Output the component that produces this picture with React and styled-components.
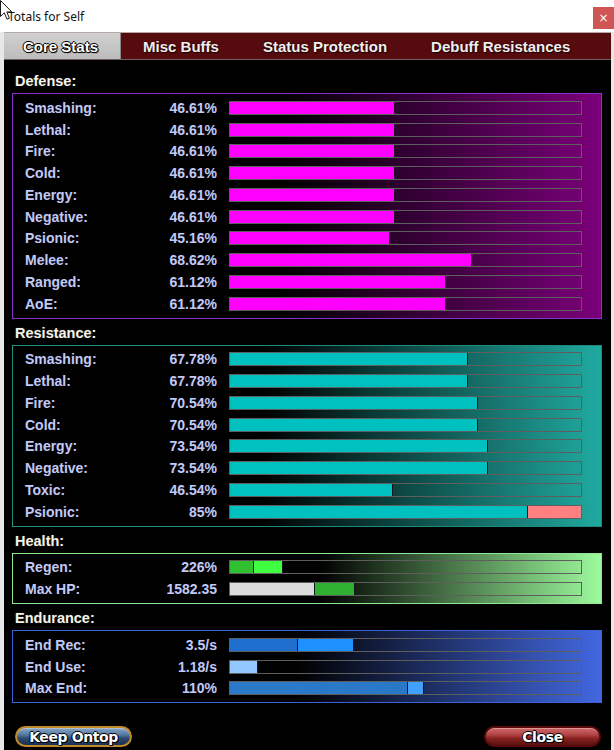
import React from "react";
import styled, { createGlobalStyle } from "styled-components";

const GlobalStyle = createGlobalStyle`
  html, body {
    margin: 0;
    padding: 0;
    background: #e8e8e8;
    overflow: hidden;
  }
  body {
    font-family: "Liberation Sans", Arial, sans-serif;
    height: 750px;
  }
`;

const sections = [
    {
        title: "Defense:",
        border: "#8c2fd0",
        tint: "#7a007a",
        start: 45,
        rows: [
            ["Smashing:", "46.61%", [[46.61, "#ff00ff"]]],
            ["Lethal:", "46.61%", [[46.61, "#ff00ff"]]],
            ["Fire:", "46.61%", [[46.61, "#ff00ff"]]],
            ["Cold:", "46.61%", [[46.61, "#ff00ff"]]],
            ["Energy:", "46.61%", [[46.61, "#ff00ff"]]],
            ["Negative:", "46.61%", [[46.61, "#ff00ff"]]],
            ["Psionic:", "45.16%", [[45.16, "#ff00ff"]]],
            ["Melee:", "68.62%", [[68.62, "#ff00ff"]]],
            ["Ranged:", "61.12%", [[61.12, "#ff00ff"]]],
            ["AoE:", "61.12%", [[61.12, "#ff00ff"]]],
        ],
    },
    {
        title: "Resistance:",
        border: "#1f8a80",
        tint: "#20aaa0",
        start: 42,
        edge: true,
        rows: [
            ["Smashing:", "67.78%", [[67.78, "#00c0c0"]]],
            ["Lethal:", "67.78%", [[67.78, "#00c0c0"]]],
            ["Fire:", "70.54%", [[70.54, "#00c0c0"]]],
            ["Cold:", "70.54%", [[70.54, "#00c0c0"]]],
            ["Energy:", "73.54%", [[73.54, "#00c0c0"]]],
            ["Negative:", "73.54%", [[73.54, "#00c0c0"]]],
            ["Toxic:", "46.54%", [[46.54, "#00c0c0"]]],
            ["Psionic:", "85%", [[85, "#00c0c0"], [15, "#ff8080"]]],
        ],
    },
    {
        title: "Health:",
        border: "#8fe88f",
        tint: "#9cfa9c",
        start: 52,
        edge: true,
        rows: [
            ["Regen:", "226%", [[6.8, "#30c030"], [8.2, "#40ff40"]]],
            ["Max HP:", "1582.35", [[24.2, "#dcdcdc"], [11.4, "#30b030"]]],
        ],
    },
    {
        title: "Endurance:",
        border: "#3a62d8",
        tint: "#4268e0",
        start: 48,
        edge: true,
        rows: [
            ["End Rec:", "3.5/s", [[19.4, "#1e6fce"], [15.9, "#1e90ff"]]],
            ["End Use:", "1.18/s", [[8, "#90c8ff"]]],
            ["Max End:", "110%", [[50.7, "#2a78c8"], [4.6, "#40a0ff"]]],
        ],
    },
];

const tabs = ["Core Stats", "Misc Buffs", "Status Protection", "Debuff Resistances"];

function Cursor() {
    return (
        <CursorSvg width="14" height="22" viewBox="0 0 14 22">
            <path
                d="M0.5 0.5 L0.5 16.5 L4.3 12.8 L7 19.2 L9.4 18.2 L6.8 11.9 L11.8 11.9 Z"
                fill="#ffffff"
                stroke="#1a1a1a"
                strokeWidth="1"
                strokeLinejoin="round"
            />
        </CursorSvg>
    );
}

function StatRow({ label, value, segs, edge }) {
    return (
        <StyledRow>
            <StyledLabel>{label}</StyledLabel>
            <StyledValue>{value}</StyledValue>
            <StyledBar>
                {segs.map(([w, c], i) => (
                    <StyledFill
                        key={i}
                        $color={c}
                        $edge={edge && c !== "#ff8080"}
                        style={{ width: `${w}%` }}
                    />
                ))}
            </StyledBar>
        </StyledRow>
    );
}

export default function App() {
    return (
        <>
            <GlobalStyle />
            <StyledTitleBar>
                <Cursor />
                <StyledTitle>Totals for Self</StyledTitle>
                <StyledCloseBox>×</StyledCloseBox>
            </StyledTitleBar>
            <StyledWindow>
                <StyledTabStrip>
                    {tabs.map((t, i) => (
                        <StyledTab key={t} $active={i === 0}>
                            {t}
                        </StyledTab>
                    ))}
                </StyledTabStrip>
                <StyledContent>
                    {sections.map((s) => (
                        <section key={s.title}>
                            <StyledHeader>{s.title}</StyledHeader>
                            <StyledPanel $border={s.border} $tint={s.tint} $start={s.start}>
                                {s.rows.map(([label, value, segs]) => (
                                    <StatRow
                                        key={label}
                                        label={label}
                                        value={value}
                                        segs={segs}
                                        edge={s.edge}
                                    />
                                ))}
                            </StyledPanel>
                        </section>
                    ))}
                    <StyledFooter>
                        <StyledPill $tone="blue">Keep Ontop</StyledPill>
                        <StyledPill $tone="red">Close</StyledPill>
                    </StyledFooter>
                </StyledContent>
            </StyledWindow>
        </>
    );
}

const CursorSvg = styled.svg`
    position: absolute;
    left: 0;
    top: 0;
`;
const StyledTitleBar = styled.div`
    position: relative;
    height: 32px;
    background: #ffffff;
    display: flex;
    align-items: center;
    padding-left: 8px;
`;
const StyledTitle = styled.span`
    font-family: "Noto Sans", "Open Sans", sans-serif;
    font-size: 12px;
    color: #111;
`;
const StyledCloseBox = styled.div`
    margin-left: auto;
    align-self: flex-start;
    margin-top: 7px;
    width: 21px;
    height: 22px;
    background: #d05656;
    color: #fff;
    font-family: "DejaVu Sans", sans-serif;
    font-size: 12px;
    display: flex;
    align-items: center;
    justify-content: center;
`;
const StyledWindow = styled.div`
    margin-left: 4px;
    width: 607px;
    height: 718px;
    background: #000;
    overflow: hidden;
`;
const StyledTabStrip = styled.div`
    display: flex;
    height: 26px;
    background: #560c0f;
    border-top: 1px solid #b4a8a8;
    border-bottom: 1px solid #6e6060;
`;
const StyledTab = styled.div`
    padding: 0 22px 0 ${(p) => (p.$active ? "19px" : "22px")};
    display: flex;
    align-items: center;
    font-size: 15px;
    font-weight: 700;
    color: ${(p) => (p.$active ? "#ffffff" : "#eeeeee")};
    background: ${(p) => (p.$active ? "linear-gradient(#d0d0d0, #bcbcbc)" : "transparent")};
    border-right: ${(p) => (p.$active ? "1px solid #8a8a8a" : "none")};
    text-shadow: ${(p) =>
        p.$active
            ? "1px 0 0 #000, -1px 0 0 #000, 0 1px 0 #000, 0 -1px 0 #000, 1px 1px 1px #000"
            : "1px 1px 1px #200000, 0 0 2px #300000"};
`;
const StyledContent = styled.div`
    padding-top: 7px;
`;
const StyledHeader = styled.div`
    padding: 2px 0 0 11px;
    height: 24px;
    line-height: 24px;
    font-size: 14.5px;
    font-weight: 700;
    color: #f4f4ea;
    text-shadow: 1px 1px 1px #000, 0 0 2px #333;
`;
const StyledPanel = styled.div`
    margin: 0 9px 0 8px;
    border: 1px solid ${(p) => p.$border};
    background: linear-gradient(90deg, #000 ${(p) => p.$start}%, ${(p) => p.$tint} 100%);
    padding: 3px 0 3px 12px;
`;
const StyledRow = styled.div`
    display: grid;
    grid-template-columns: 120px 72px 353px;
    align-items: center;
    height: 21.75px;
`;
const StyledLabel = styled.span`
    font-size: 14px;
    font-weight: 700;
    color: #c2caf4;
    text-shadow: 1px 1px 1px #000, 0 0 2px #10103a;
    white-space: nowrap;
`;
const StyledValue = styled(StyledLabel)`
    text-align: right;
`;
const StyledBar = styled.div`
    margin-left: 12px;
    width: 353px;
    height: 14px;
    box-sizing: border-box;
    border: 1px solid #5e5e5e;
    display: flex;
    overflow: hidden;
`;
const StyledFill = styled.div`
    height: 100%;
    box-sizing: border-box;
    background: ${(p) => p.$color};
    border-right: ${(p) => (p.$edge ? "1px solid #0c1a1a" : "none")};
`;
const StyledFooter = styled.div`
    display: flex;
    justify-content: space-between;
    margin-top: 23px;
    padding: 0 10px 0 11px;
`;
const StyledPill = styled.div`
    width: 117px;
    height: 21px;
    box-sizing: border-box;
    border-radius: 11px;
    display: flex;
    align-items: center;
    justify-content: center;
    font-family: "DejaVu Sans", sans-serif;
    font-size: 14px;
    font-weight: 700;
    letter-spacing: -0.4px;
    color: #fff;
    text-shadow: 1px 0 0 #000, -1px 0 0 #000, 0 1px 0 #000, 0 -1px 0 #000, 1px 1px 0 #000;
    border: 2px solid ${(p) => (p.$tone === "blue" ? "#c08a2a" : "#5a0a0a")};
    background: ${(p) =>
        p.$tone === "blue"
            ? "linear-gradient(#8aa8c8 0%, #5478a0 40%, #2c4a70 60%, #1a3050 100%)"
            : "linear-gradient(#d06a6a 0%, #b04444 40%, #8a2222 60%, #5a1010 100%)"};
    box-shadow: inset 0 1px 0 rgba(255, 255, 255, 0.3);
`;
